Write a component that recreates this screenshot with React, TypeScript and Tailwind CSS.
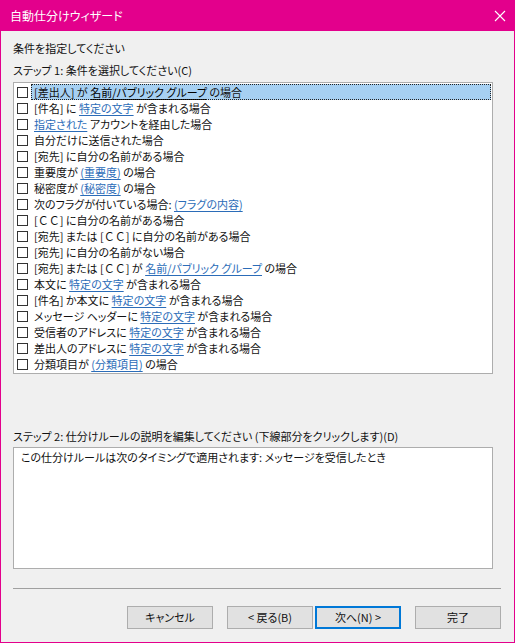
import React from "react";

type Part = { t: string; link?: boolean; wide?: boolean };

const CC: Part[] = [{ t: "[" }, { t: "ＣＣ", wide: true }, { t: "]" }];

const rows: Part[][] = [
  [{ t: "[差出人] が " }, { t: "名前/パブリック グループ", link: true }, { t: " の場合" }],
  [{ t: "[件名] に " }, { t: "特定の文字", link: true }, { t: " が含まれる場合" }],
  [{ t: "指定された", link: true }, { t: " アカウントを経由した場合" }],
  [{ t: "自分だけに送信された場合" }],
  [{ t: "[宛先] に自分の名前がある場合" }],
  [{ t: "重要度が " }, { t: "(重要度)", link: true }, { t: " の場合" }],
  [{ t: "秘密度が " }, { t: "(秘密度)", link: true }, { t: " の場合" }],
  [{ t: "次のフラグが付いている場合: " }, { t: "(フラグの内容)", link: true }],
  [...CC, { t: " に自分の名前がある場合" }],
  [{ t: "[宛先] または " }, ...CC, { t: " に自分の名前がある場合" }],
  [{ t: "[宛先] に自分の名前がない場合" }],
  [{ t: "[宛先] または " }, ...CC, { t: " が " }, { t: "名前/パブリック グループ", link: true }, { t: " の場合" }],
  [{ t: "本文に " }, { t: "特定の文字", link: true }, { t: " が含まれる場合" }],
  [{ t: "[件名] か本文に " }, { t: "特定の文字", link: true }, { t: " が含まれる場合" }],
  [{ t: "メッセージ ヘッダーに " }, { t: "特定の文字", link: true }, { t: " が含まれる場合" }],
  [{ t: "受信者のアドレスに " }, { t: "特定の文字", link: true }, { t: " が含まれる場合" }],
  [{ t: "差出人のアドレスに " }, { t: "特定の文字", link: true }, { t: " が含まれる場合" }],
  [{ t: "分類項目が " }, { t: "(分類項目)", link: true }, { t: " の場合" }],
];

function Row({ parts, selected }: { parts: Part[]; selected?: boolean }) {
  return (
    <div className="flex h-[16px] items-center pl-[3px]">
      <div className="w-[11px] h-[11px] border border-[#333333] bg-white shrink-0" />
      <div
        className={
          "ml-[3px] h-[16px] flex items-center pl-[3px] whitespace-pre leading-[16px] " +
          (selected
            ? "flex-1 mr-[1px] bg-[#a6d0f2] outline outline-1 outline-dotted outline-[#222] -outline-offset-1"
            : "")
        }
      >
        {parts.map((p, i) =>
          p.link ? (
            <span
              key={i}
              className={
                "underline underline-offset-2 " +
                (selected ? "text-black" : "text-[#2b6cb8]")
              }
            >
              {p.t}
            </span>
          ) : p.wide ? (
            <span key={i} className="[font-feature-settings:normal]">
              {p.t}
            </span>
          ) : (
            <span key={i}>{p.t}</span>
          )
        )}
      </div>
    </div>
  );
}

function Btn({ label, primary }: { label: string; primary?: boolean }) {
  return (
    <div
      className={
        "w-[86px] h-[23px] flex items-center justify-center bg-[#e1e1e1] text-[11px] text-[#111] " +
        (primary ? "border-2 border-[#0078d7]" : "border border-[#adadad]")
      }
    >
      {label}
    </div>
  );
}

export default function App() {
  return (
    <div className="w-[515px] h-[643px] border border-[#e3008c] bg-[#f0f0f0] flex flex-col text-[11px] text-[#111] font-['Noto_Sans_CJK_JP','Noto_Sans',sans-serif] [font-feature-settings:'palt']">
      <div className="h-[30px] bg-[#e3008c] flex items-center justify-between pl-[9px] pr-[8px] shrink-0">
        <span className="text-white text-[12px]">自動仕分けウィザード</span>
        <svg width="12" height="12" viewBox="0 0 12 12">
          <path d="M1 1 L11 11 M11 1 L1 11" stroke="#ffffff" strokeWidth="1.1" />
        </svg>
      </div>
      <div className="flex flex-col pl-[12px] pr-[13px]">
        <div className="mt-[9px] h-[16px] leading-[16px]">条件を指定してください</div>
        <div className="mt-[6px] h-[16px] leading-[16px]">ステップ 1: 条件を選択してください(C)</div>
        <div className="mt-[4px] w-[480px] h-[292px] border border-[#adadad] bg-white pt-[1px]">
          {rows.map((r, i) => (
            <Row key={i} parts={r} selected={i === 0} />
          ))}
        </div>
        <div className="mt-[54px] h-[16px] leading-[16px]">
          ステップ 2: 仕分けルールの説明を編集してください (下線部分をクリックします)(D)
        </div>
        <div className="mt-[3px] w-[480px] h-[122px] border border-[#adadad] bg-white px-[7px] pt-[1px] leading-[16px]">
          この仕分けルールは次のタイミングで適用されます: メッセージを受信したとき
        </div>
        <div className="mt-[19px] w-[488px] h-[1px] bg-[#a0a0a0]" />
        <div className="mt-[17px] flex justify-end">
          <Btn label="キャンセル" />
          <div className="w-[14px]" />
          <Btn label="< 戻る(B)" />
          <div className="w-[2px]" />
          <Btn label="次へ(N) >" primary />
          <div className="w-[14px]" />
          <Btn label="完了" />
        </div>
      </div>
    </div>
  );
}
